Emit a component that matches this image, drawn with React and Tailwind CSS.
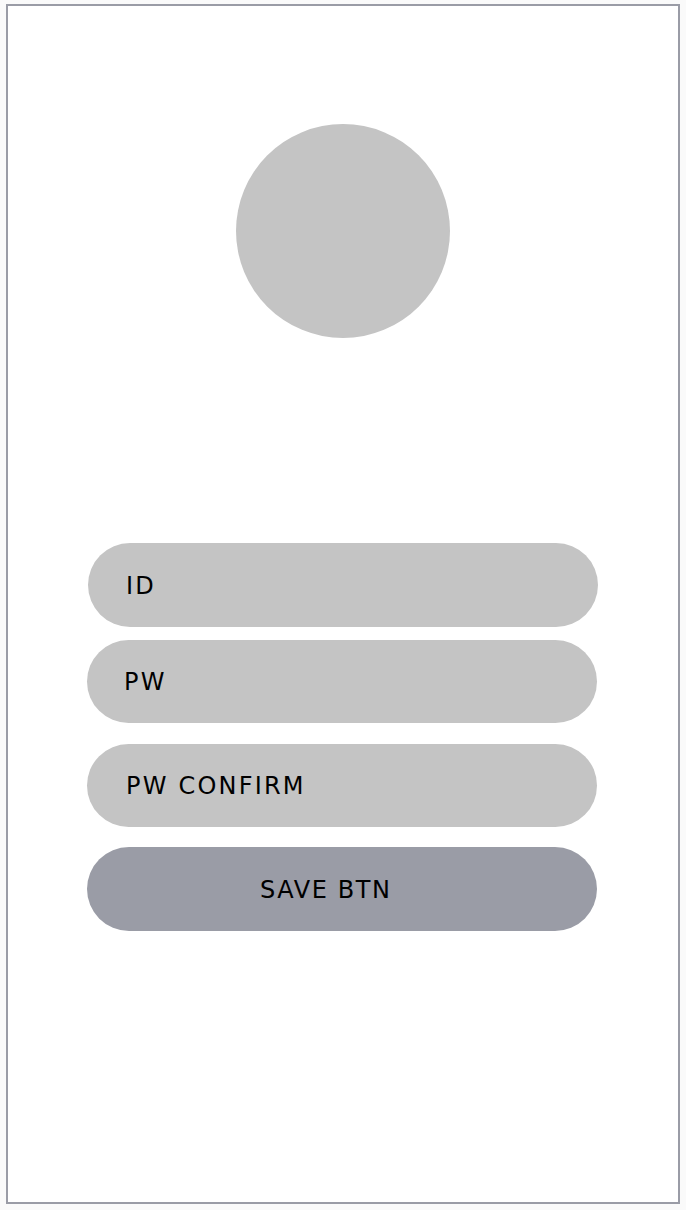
export default function App() {
  const font = { fontFamily: '"DejaVu Sans", "Open Sans", sans-serif' };
  return (
    <div className="w-[686px] h-[1210px] bg-[#fafafa] pt-[4px] pl-[6px]">
      <div className="w-[674px] h-[1200px] border-2 border-[#9a9ca6] bg-white flex flex-col" style={font}>
        <div className="flex justify-center pt-[118px]">
          <div className="w-[214px] h-[214px] rounded-full bg-[#c4c4c4]" />
        </div>
        <div className="flex flex-col pl-[79px] mt-[205px]">
          <div className="w-[510px] h-[84px] rounded-full bg-[#c4c4c4] flex items-center pl-[38px] pt-[1px] ml-[1px] text-[24px] tracking-[2.2px] text-black">ID</div>
          <div className="w-[510px] h-[83px] rounded-full bg-[#c4c4c4] flex items-center pl-[37px] pt-[1px] mt-[13px] text-[24px] tracking-[2.2px] text-black">PW</div>
          <div className="w-[510px] h-[83px] rounded-full bg-[#c4c4c4] flex items-center pl-[39px] pt-[1px] mt-[21px] text-[24px] tracking-[2.2px] text-black">PW CONFIRM</div>
          <div className="w-[510px] h-[84px] rounded-full bg-[#9a9ca6] flex items-center pl-[173px] pt-[1px] mt-[20px] text-[24px] tracking-[1.6px] text-black">SAVE BTN</div>
        </div>
      </div>
    </div>
  );
}
